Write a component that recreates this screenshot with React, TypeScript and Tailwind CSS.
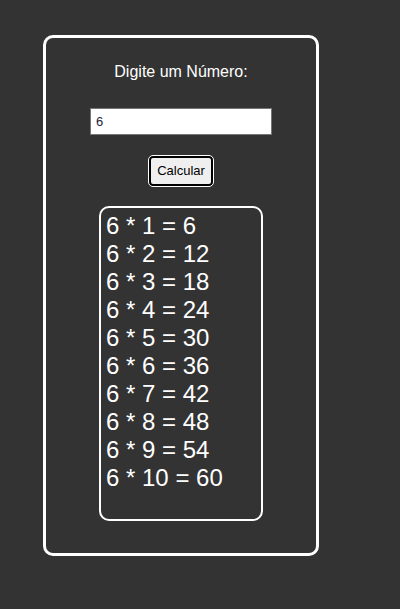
import React, { useState } from "react";

function App() {
  const [num, setNum] = useState("6");
  const [rows, setRows] = useState<string[]>(() =>
    Array.from({ length: 10 }, (_, i) => `6 * ${i + 1} = ${6 * (i + 1)}`)
  );

  const calcular = () => {
    const n = Number(num);
    setRows(Array.from({ length: 10 }, (_, i) => `${n} * ${i + 1} = ${n * (i + 1)}`));
  };

  return (
    <div className="min-h-[609px] w-full bg-[#333333] pt-[35px] pl-[43px] font-['Liberation_Sans',Arial,sans-serif]">
      {/* card */}
      <div className="w-[276px] h-[521px] border-[3px] border-white rounded-[10px] flex flex-col items-center pt-[25px]">
        <p className="text-white text-[16px] leading-[18px]">Digite um Número:</p>

        <input
          value={num}
          onChange={(e) => setNum(e.target.value)}
          className="mt-[27px] w-[182px] h-[27px] bg-white border border-[#767676] px-[5px] text-[13px] text-[#1c1c40] outline-none"
        />

        <button
          onClick={calcular}
          className="mt-[21px] w-[64px] h-[30px] bg-[#efefef] border-2 border-black rounded-[4px] outline outline-1 outline-white text-[13px] text-black"
        >
          Calcular
        </button>

        {/* result */}
        <div className="mt-[20px] w-[164px] h-[315px] border-2 border-white rounded-[10px] px-[5px] pt-[4px] text-white text-[24px] leading-[28px]">
          {rows.map((r) => (
            <div key={r}>{r}</div>
          ))}
        </div>
      </div>
    </div>
  );
}

export default App;
